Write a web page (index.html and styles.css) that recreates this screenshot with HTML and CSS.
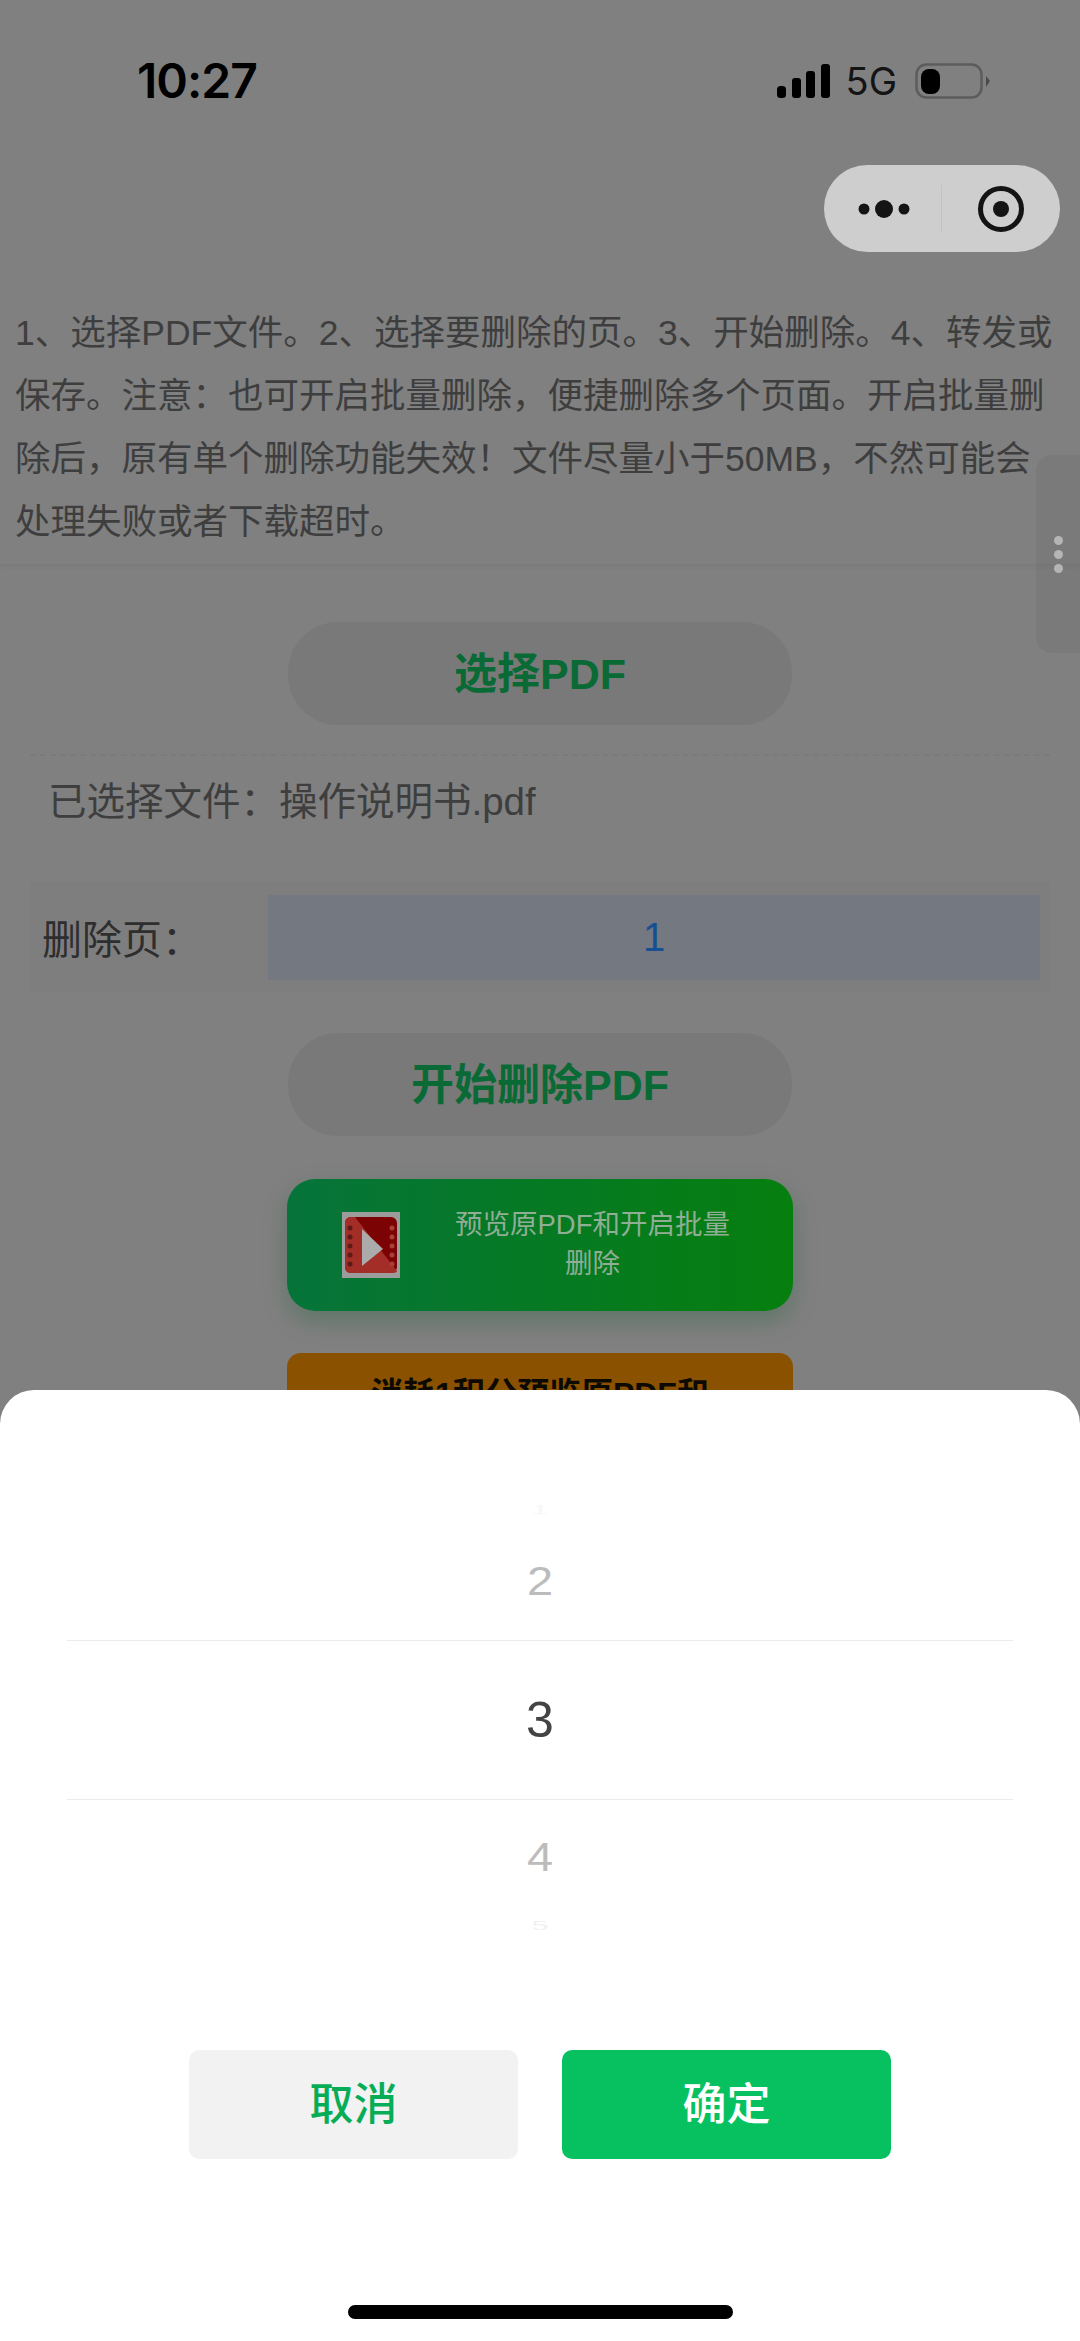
FILE: index.html
```html
<!DOCTYPE html>
<html lang="zh-CN">
<head>
    <meta charset="UTF-8">
    <meta name="viewport" content="width=device-width, initial-scale=1.0">
    <title>PDF删除页</title>
    <link rel="stylesheet" href="styles.css">
</head>
<body>
    <div id="page">
        <!-- 状态栏 -->
        <div class="status-bar">
            <span class="time">10:27</span>
            <div class="status-right">
                <svg class="signal" width="53" height="34" viewBox="0 0 53 34">
                    <rect x="0" y="22" width="9" height="12" rx="3.5"/>
                    <rect x="15" y="14" width="9" height="20" rx="3"/>
                    <rect x="29" y="7" width="9" height="27" rx="3"/>
                    <rect x="44" y="0" width="9" height="34" rx="3"/>
                </svg>
                <span class="net">5G</span>
                <svg class="battery" width="75" height="36" viewBox="0 0 75 36">
                    <rect x="1.5" y="1.5" width="65" height="33" rx="10" fill="none" stroke="#5c5c5c" stroke-width="2.5"/>
                    <rect x="6" y="6" width="19" height="25" rx="8" fill="#000"/>
                    <path d="M71 13 L75 18 L71 24 Z" fill="#4a4a4a"/>
                </svg>
            </div>
        </div>

        <!-- 小程序胶囊 -->
        <div class="capsule-row">
            <div class="capsule">
                <div class="capsule-more">
                    <svg width="56" height="20" viewBox="0 0 56 20">
                        <circle cx="6" cy="10" r="5.5"/>
                        <circle cx="26" cy="10" r="9"/>
                        <circle cx="46" cy="10" r="5.5"/>
                    </svg>
                </div>
                <div class="capsule-close">
                    <svg width="48" height="48" viewBox="0 0 48 48">
                        <circle cx="24" cy="24" r="20.5" fill="none" stroke="#141414" stroke-width="5"/>
                        <circle cx="24" cy="24" r="8"/>
                    </svg>
                </div>
            </div>
        </div>

        <!-- 说明 -->
        <p class="intro">1、选择PDF文件。2、选择要删除的页。3、开始删除。4、转发或保存。注意&#xFF1A;也可开启批量删除&#xFF0C;便捷删除多个页面。开启批量删除后&#xFF0C;原有单个删除功能失效&#xFF01;文件尽量小于50MB&#xFF0C;不然可能会处理失败或者下载超时。</p>

        <div class="pill-btn pill-select">选择PDF</div>

        <div class="file-row">已选择文件&#xFF1A;操作说明书.pdf</div>

        <div class="page-row">
            <span class="page-label">删除页&#xFF1A;</span>
            <div class="page-input">1</div>
        </div>

        <div class="pill-btn pill-start">开始删除PDF</div>

        <div class="media-btn">
            <svg class="media-icon" width="58" height="66" viewBox="0 0 58 66">
                <rect width="58" height="66" fill="#9c9c9c"/>
                <rect x="3" y="5" width="52" height="56" rx="6" fill="#7c0303"/>
                <path d="M3 11 Q3 5 9 5 H13 L55 59 Q55 61 49 61 H9 Q3 61 3 55 Z" fill="#a32d27"/>
                <path d="M20 17 L41 37 L20 54 Z" fill="#ababab"/>
                <g fill="#5e1a16">
                    <circle cx="8" cy="16" r="2.5"/><circle cx="8" cy="25" r="2.5"/><circle cx="8" cy="34" r="2.5"/><circle cx="8" cy="43" r="2.5"/><circle cx="8" cy="52" r="2.5"/>
                </g>
                <g fill="#a8403a">
                    <circle cx="50" cy="16" r="2.5"/><circle cx="50" cy="25" r="2.5"/><circle cx="50" cy="34" r="2.5"/><circle cx="50" cy="43" r="2.5"/><circle cx="50" cy="52" r="2.5"/>
                </g>
            </svg>
            <div class="media-text">预览原PDF和开启批量<br>删除</div>
        </div>

        <div class="cost-btn">消耗1积分预览原PDF和</div>

        <!-- 右侧把手 -->
        <div class="side-handle">
            <i></i><i></i><i></i>
        </div>

        <!-- 选择器弹层 -->
        <div class="sheet">
            <div class="picker">
                <div class="pick-item pick-ghost pick-ghost-top">1</div>
                <div class="pick-item pick-near pick-above">2</div>
                <div class="pick-item pick-current">3</div>
                <div class="pick-item pick-near pick-below">4</div>
                <div class="pick-item pick-ghost pick-ghost-bottom">5</div>
            </div>
            <div class="sheet-actions">
                <div class="sheet-btn sheet-cancel">取消</div>
                <div class="sheet-btn sheet-ok">确定</div>
            </div>
            <div class="home-bar"></div>
        </div>
    </div>
</body>
</html>
```

FILE: styles.css
```css
/* 全体 */
body {
    margin: 0;
    padding: 0;
    background-color: #808080;
    font-family: "Liberation Sans", "Noto Sans CJK SC", sans-serif;
}
#page {
    position: relative;
    width: 1080px;
    height: 2341px;
    overflow: hidden;
    display: flex;
    flex-direction: column;
    align-items: center;
}

/* 状态栏 */
.status-bar {
    box-sizing: border-box;
    width: 100%;
    height: 130px;
    padding: 58px 90px 0 137px;
    display: flex;
    justify-content: space-between;
    align-items: flex-start;
}
.time {
    font-family: Inter, "Liberation Sans", sans-serif;
    font-size: 48px;
    font-weight: 600;
    line-height: 46px;
    letter-spacing: -1px;
    color: #000;
}
.status-right {
    display: flex;
    align-items: center;
    margin-top: 5px;
}
.signal {
    fill: #000;
}
.net {
    font-family: Inter, "Liberation Sans", sans-serif;
    font-size: 38px;
    line-height: 34px;
    color: #141414;
    margin: 0 18px 0 16px;
}

/* 胶囊 */
.capsule-row {
    box-sizing: border-box;
    width: 100%;
    margin-top: 35px;
    padding-right: 20px;
    display: flex;
    justify-content: flex-end;
}
.capsule {
    width: 236px;
    height: 87px;
    border-radius: 44px;
    background-color: #cecece;
    display: flex;
    align-items: center;
}
.capsule-more {
    box-sizing: border-box;
    width: 118px;
    height: 47px;
    padding-left: 34px;
    border-right: 1px solid #c2c2c2;
    display: flex;
    align-items: center;
    fill: #141414;
}
.capsule-close {
    flex: 1;
    display: flex;
    justify-content: center;
    fill: #141414;
}

/* 说明 */
.intro {
    box-sizing: border-box;
    width: 100%;
    margin: 50px 0 0;
    padding: 0 15px 10px;
    font-size: 35.5px;
    line-height: 63px;
    color: #3e3e3e;
    border-bottom: 2px solid #7b7b7b;
    box-shadow: 0 2px 4px rgba(0, 0, 0, 0.03);
}

/* 按钮 */
.pill-btn {
    box-sizing: border-box;
    width: 504px;
    height: 103px;
    padding-bottom: 7px;
    border-radius: 50px;
    background-color: #797979;
    color: #0a6a35;
    font-size: 43px;
    font-weight: 700;
    display: flex;
    align-items: center;
    justify-content: center;
}
.pill-select {
    margin-top: 56px;
}
.pill-start {
    margin-top: 41px;
}

.file-row {
    box-sizing: border-box;
    width: 1020px;
    height: 95px;
    margin-top: 29px;
    padding-left: 18px;
    border-top: 2px dashed #7b7b7b;
    font-size: 38.5px;
    line-height: 92px;
    color: #3e3e3e;
}
.page-row {
    box-sizing: border-box;
    width: 1020px;
    height: 110px;
    margin-top: 33px;
    padding: 0 10px 0 12px;
    display: flex;
    align-items: center;
    background-color: #7e7e7e;
}
.page-label {
    width: 226px;
    font-size: 40px;
    color: #2e2e2e;
}
.page-input {
    flex: 1;
    height: 85px;
    font-size: 40px;
    line-height: 85px;
    text-align: center;
    color: #164f94;
    background-color: #737881;
}

.media-btn {
    box-sizing: border-box;
    width: 506px;
    height: 132px;
    margin-top: 43px;
    padding: 0 38px 0 55px;
    border-radius: 28px;
    background: linear-gradient(90deg, #06743a, #067f0e);
    box-shadow: 0 10px 24px rgba(0, 90, 40, 0.28);
    display: flex;
    align-items: center;
}
.media-text {
    flex: 1;
    padding: 0 0 2px 30px;
    font-size: 27.5px;
    line-height: 39px;
    text-align: center;
    color: #8fae95;
}
.cost-btn {
    flex: none;
    box-sizing: border-box;
    width: 506px;
    height: 132px;
    margin-top: 42px;
    padding-top: 15px;
    border-radius: 14px;
    background-color: #8a5200;
    color: #0d0a03;
    font-size: 32px;
    font-weight: 700;
    text-align: center;
}

/* 右侧把手 */
.side-handle {
    position: absolute;
    top: 455px;
    right: 0;
    width: 44px;
    height: 198px;
    border-radius: 16px 0 0 16px;
    background-color: rgba(100, 100, 100, 0.22);
    display: flex;
    flex-direction: column;
    justify-content: center;
    gap: 5px;
}
.side-handle i {
    display: block;
    width: 9px;
    height: 9px;
    margin-left: 18px;
    border-radius: 50%;
    background-color: #b5b5b5;
}

/* 选择器 */
.sheet {
    position: absolute;
    left: 0;
    right: 0;
    bottom: 0;
    height: 951px;
    border-radius: 34px 34px 0 0;
    background-color: #fff;
    display: flex;
    flex-direction: column;
    align-items: center;
}
.picker {
    box-sizing: border-box;
    width: 946px;
    margin-top: 108px;
    text-align: center;
}
.pick-ghost {
    height: 24px;
    font-size: 30px;
    line-height: 24px;
    transform: scaleY(0.45);
}
.pick-ghost-top {
    color: #f7f7f7;
}
.pick-ghost-bottom {
    color: #f1f1f1;
}
.pick-near {
    font-size: 47px;
    color: #bcbcbc;
    transform: scaleY(0.85);
}
.pick-above {
    height: 118px;
    line-height: 118px;
}
.pick-below {
    height: 114px;
    line-height: 114px;
}
.pick-current {
    box-sizing: border-box;
    height: 160px;
    font-size: 50px;
    line-height: 158px;
    color: #444;
    border-top: 1px solid #ebebeb;
    border-bottom: 1px solid #ebebeb;
}
.sheet-actions {
    width: 702px;
    margin-top: 112px;
    display: flex;
    justify-content: space-between;
}
.sheet-btn {
    width: 329px;
    height: 109px;
    border-radius: 10px;
    font-size: 44px;
    font-weight: 500;
    line-height: 109px;
    text-align: center;
}
.sheet-cancel {
    background-color: #f2f2f2;
    color: #06ad56;
}
.sheet-ok {
    background-color: #07c160;
    color: #fff;
}
.home-bar {
    width: 385px;
    height: 14px;
    margin-top: 146px;
    border-radius: 7px;
    background-color: #000;
}
```
